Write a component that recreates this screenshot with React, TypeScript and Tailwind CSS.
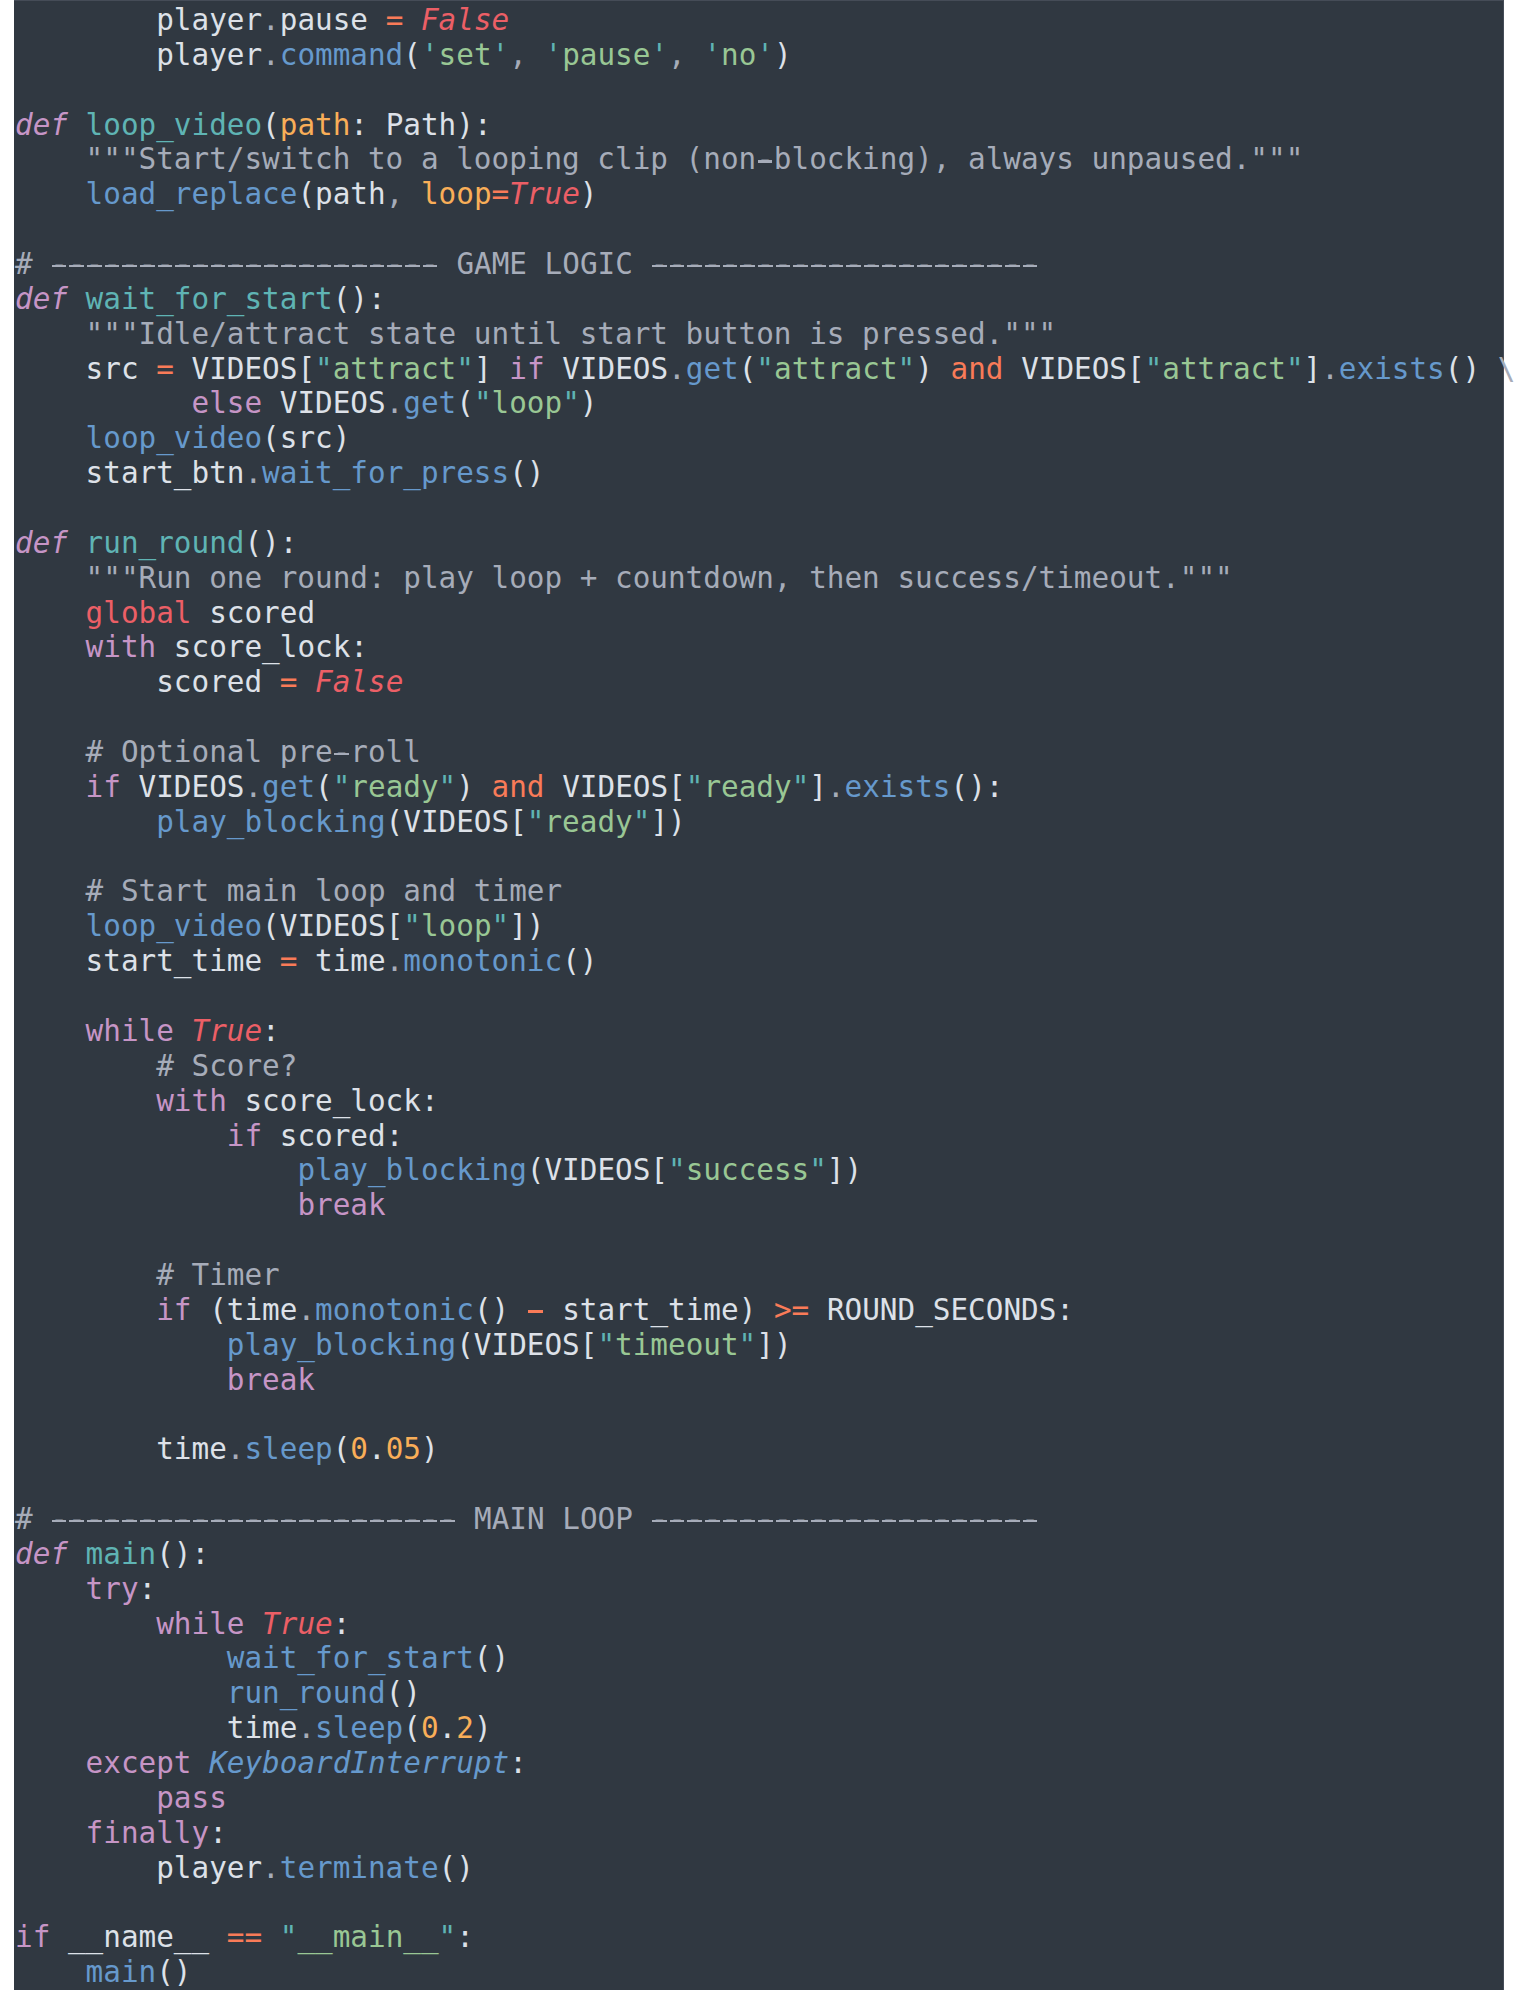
import React from 'react';

const code = [
  '        player.pause = False',
  "        player.command('set', 'pause', 'no')",
  '',
  'def loop_video(path: Path):',
  '    """Start/switch to a looping clip (non-blocking), always unpaused."""',
  '    load_replace(path, loop=True)',
  '',
  '# ---------------------- GAME LOGIC ----------------------',
  'def wait_for_start():',
  '    """Idle/attract state until start button is pressed."""',
  '    src = VIDEOS["attract"] if VIDEOS.get("attract") and VIDEOS["attract"].exists() \\',
  '          else VIDEOS.get("loop")',
  '    loop_video(src)',
  '    start_btn.wait_for_press()',
  '',
  'def run_round():',
  '    """Run one round: play loop + countdown, then success/timeout."""',
  '    global scored',
  '    with score_lock:',
  '        scored = False',
  '',
  '    # Optional pre-roll',
  '    if VIDEOS.get("ready") and VIDEOS["ready"].exists():',
  '        play_blocking(VIDEOS["ready"])',
  '',
  '    # Start main loop and timer',
  '    loop_video(VIDEOS["loop"])',
  '    start_time = time.monotonic()',
  '',
  '    while True:',
  '        # Score?',
  '        with score_lock:',
  '            if scored:',
  '                play_blocking(VIDEOS["success"])',
  '                break',
  '',
  '        # Timer',
  '        if (time.monotonic() - start_time) >= ROUND_SECONDS:',
  '            play_blocking(VIDEOS["timeout"])',
  '            break',
  '',
  '        time.sleep(0.05)',
  '',
  '# ----------------------- MAIN LOOP ----------------------',
  'def main():',
  '    try:',
  '        while True:',
  '            wait_for_start()',
  '            run_round()',
  '            time.sleep(0.2)',
  '    except KeyboardInterrupt:',
  '        pass',
  '    finally:',
  '        player.terminate()',
  '',
  'if __name__ == "__main__":',
  '    main()',
];

// Mariana-like palette
const FG = 'text-[#dde1e8]';
const PINK = 'text-[#c695c6]';
const TEAL = 'text-[#5fb4b4]';
const BLUE = 'text-[#6699cc]';
const GREEN = 'text-[#99c794]';
const ORANGE = 'text-[#f9ae58]';
const RED = 'text-[#ec5f66]';
const RED2 = 'text-[#f97b58]';
const GRAY = 'text-[#a6acb9]';

const KEYWORDS = new Set(['if', 'else', 'while', 'with', 'try', 'except', 'finally', 'pass', 'break']);

type Tok = { t: string; c: string };

function highlight(line: string): Tok[] {
  const out: Tok[] = [];
  const re = /^(\s+|""".*?"""|#.*|"[^"]*"|'[^']*'|\d+\.\d+|\d+|[A-Za-z_]\w*|==|>=|[=\-+]|[.,]|[:()[\]]|\\|.)/;
  let i = 0;
  let prevWord = '';
  let depth = 0;
  let inDef = false;

  while (i < line.length) {
    const s = re.exec(line.slice(i))![0];
    const rest = line.slice(i + s.length);
    i += s.length;

    if (/^\s+$/.test(s)) {
      out.push({ t: s, c: FG });
      continue;
    }
    if (s.startsWith('"""') || s.startsWith('#')) {
      out.push({ t: s, c: GRAY });
      continue;
    }
    if (s.startsWith('"') || s.startsWith("'")) {
      out.push({ t: s[0], c: TEAL });
      out.push({ t: s.slice(1, -1), c: GREEN });
      out.push({ t: s[0], c: TEAL });
      continue;
    }
    if (/^\d/.test(s)) {
      const [a, b] = s.split('.');
      out.push({ t: a, c: ORANGE });
      if (b !== undefined) {
        out.push({ t: '.', c: FG });
        out.push({ t: b, c: ORANGE });
      }
      continue;
    }
    if (/^[A-Za-z_]/.test(s)) {
      let c = FG;
      if (s === 'def') {
        c = `${PINK} italic`;
        inDef = true;
      } else if (prevWord === 'def') c = TEAL;
      else if (s === 'True' || s === 'False') c = `${RED} italic`;
      else if (s === 'global') c = RED;
      else if (KEYWORDS.has(s)) c = PINK;
      else if (s === 'and') c = RED2;
      else if (s === 'KeyboardInterrupt') c = `${BLUE} italic`;
      else if (rest.startsWith('(')) c = BLUE;
      else if (inDef && depth > 0 && /^\s*:/.test(rest)) c = ORANGE;
      else if (depth > 0 && /^=(?!=)/.test(rest)) c = ORANGE;
      out.push({ t: s, c });
      prevWord = s;
      continue;
    }
    if (s === '(') depth++;
    if (s === ')') depth--;
    if (['==', '>=', '=', '-', '+'].includes(s)) out.push({ t: s, c: RED2 });
    else if (s === '.' || s === ',' || s === '\\') out.push({ t: s, c: GRAY });
    else out.push({ t: s, c: FG });
  }
  return out;
}

// the screenshot's hyphens are long bars; lay a bar over DejaVu's short one
function renderText(t: string) {
  if (!t.includes('-')) return t;
  return t.split(/(-)/).map((part, k) =>
    part === '-' ? (
      <span key={k} className="relative inline-block">
        -
        <span className="absolute left-[1.5px] right-[1.5px] top-[17.6px] h-[2.6px] bg-current" />
      </span>
    ) : (
      part
    ),
  );
}

export default function App() {
  return (
    <div className="min-h-screen bg-white">
      <div className="ml-[14px] w-[1490px] bg-[#303841] border-t border-r border-[#454c57] pt-[2px] pl-[1px] font-['DejaVu_Sans_Mono',monospace] text-[29.32px] leading-[34.86px]">
        {code.map((line, idx) => (
          <div key={idx} className="h-[34.86px] whitespace-pre">
            {highlight(line).map((tok, j) => (
              <span key={j} className={tok.c}>
                {renderText(tok.t)}
              </span>
            ))}
          </div>
        ))}
      </div>
    </div>
  );
}
